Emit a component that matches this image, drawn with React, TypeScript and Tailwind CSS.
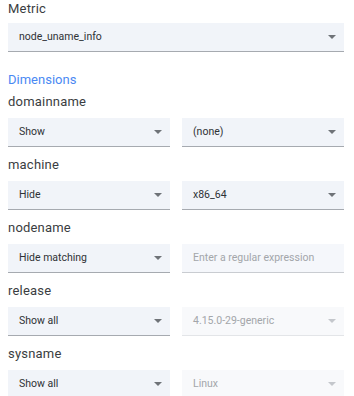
import React from "react";

const Arrow = ({ light }: { light?: boolean }) => (
  <svg width="8" height="4" viewBox="0 0 8 4" className="shrink-0">
    <polygon points="0,0 8,0 4,4" fill={light ? "#c4c7cc" : "#6f7378"} />
  </svg>
);

const Select = ({ value, disabled }: { value: string; disabled?: boolean }) => (
  <div
    className={
      "mt-[7px] flex h-[29px] items-center justify-between border-b pl-[11px] pr-[8px] " +
      (disabled
        ? "border-[#e3e5e8] bg-[#f8f9fb] text-[#a3a6aa]"
        : "border-[#a6aab0] bg-[#f1f4f9] text-[#2f3236]")
    }
  >
    <span className="text-[10.5px]">{value}</span>
    <Arrow light={disabled} />
  </div>
);

const Input = ({ placeholder }: { placeholder: string }) => (
  <div className="mt-[7px] flex h-[29px] items-center border-b border-[#c9ccd1] bg-[#f5f7fb] pl-[11px] pr-[8px]">
    <span className="text-[10.5px] text-[#a3a6aa]">{placeholder}</span>
  </div>
);

const Label = ({ children }: { children: React.ReactNode }) => (
  <div className="h-[18px] text-[13px] leading-[18px] text-[#3a3d41] tracking-[0.2px]">{children}</div>
);

export default function App() {
  const rows: { name: string; left: string; right: React.ReactNode }[] = [
    { name: "domainname", left: "Show", right: <Select value="(none)" /> },
    { name: "machine", left: "Hide", right: <Select value="x86_64" /> },
    { name: "nodename", left: "Hide matching", right: <Input placeholder="Enter a regular expression" /> },
    { name: "release", left: "Show all", right: <Select value="4.15.0-29-generic" disabled /> },
    { name: "sysname", left: "Show all", right: <Select value="Linux" disabled /> },
  ];
  return (
    <div
      className="h-[396px] w-[354px] overflow-hidden bg-white pl-[8px] pr-[10px]"
      style={{ fontFamily: "Roboto, 'Liberation Sans', sans-serif" }}
    >
      <Label>Metric</Label>
      <div className="mt-[5px] flex h-[29px] items-center justify-between border-b border-[#a6aab0] bg-[#f1f4f9] pl-[11px] pr-[8px] text-[#2f3236]">
        <span className="text-[10.5px]">node_uname_info</span>
        <Arrow />
      </div>
      <div className="mt-[19px] h-[18px] text-[13px] leading-[18px] text-[#4a89f3]">Dimensions</div>
      {rows.map((r, i) => (
        <div key={r.name} className={i === 0 ? "mt-[4px]" : "mt-[9px]"}>
          <Label>{r.name}</Label>
          <div className="grid grid-cols-2 gap-[12px]">
            <Select value={r.left} />
            {r.right}
          </div>
        </div>
      ))}
    </div>
  );
}
